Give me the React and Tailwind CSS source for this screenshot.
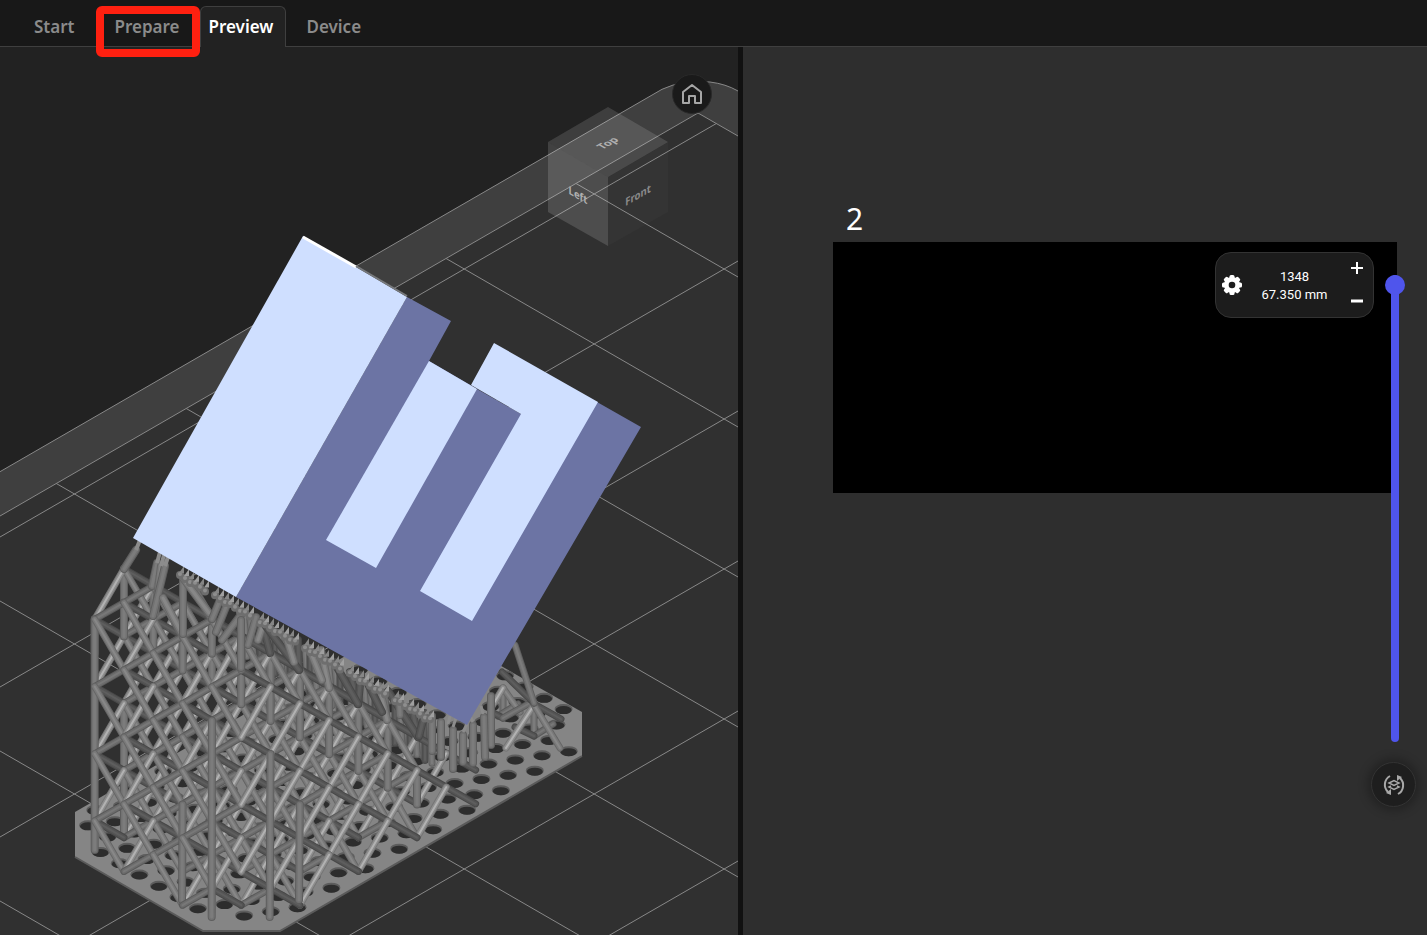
import { useMemo, useState } from "react";

const TABS = [
  { id: "start", label: "Start" },
  { id: "prepare", label: "Prepare", marked: true },
  { id: "preview", label: "Preview" },
  { id: "device", label: "Device" },
];

// [edge, body, highlight] for each strut direction
const TONES = {
  post: ["#5e5e5e", "#727272", "#7c7c7c"],
  down: ["#666666", "#7a7a7a", "#888888"],
  rise: ["#757575", "#8e8e8e", "#b2b2b2"],
  flat: ["#5a5a5a", "#6c6c6c", "#787878"],
  dark: ["#484848", "#545454", "#5e5e5e"],
};

const BASE = [
  [75, 812], [75, 857], [203, 931], [280, 931], [582, 756],
  [582, 712], [450, 637], [380, 636],
];

const node = (i, j, k) => [94.7 + 29.3 * (i + j), 854.5 + 16.9 * (i - j) - 33.6 * k];
const topLevel = (i, j) => (i === 0 && j === 0 ? 7 : 9 - j);

function buildLattice() {
  const out = [];
  const add = (a, b, tone, depth) => out.push({ a, b, tone, depth });

  for (let i = 0; i <= 5; i++) {
    for (let j = 0; j <= 8; j++) {
      const top = topLevel(i, j);
      const corner = i === 5 && j === 0;
      for (let k = corner ? 2 : 0; k <= top; k++) {
        if ((i + j + k) % 2 === 0) continue;
        const p = node(i, j, k);
        const d = i - j + k * 0.01;
        if (i < 5 && j < 7) {
          const lowOk = !(i === 4 && j === 0 && k < 3);
          if (k + 1 <= topLevel(i + 1, j) && lowOk) add(p, node(i + 1, j, k + 1), "flat", d + 0.4);
          if (k > 0 && lowOk) add(p, node(i + 1, j, k - 1), "down", d + 0.5);
        }
        // the inner cross frames stop short of the left wall
        if (i === 2 && j < 2) continue;
        if (k + 1 <= topLevel(i, j + 1)) add(p, node(i, j + 1, k + 1), "rise", d - 0.4);
        if (k > 0) add(p, node(i, j + 1, k - 1), "dark", d - 0.5);
        if (k >= top - 1 && j < 7) add(p, [p[0], p[1] + 34], "post", d - 0.8);
      }
    }
  }
  add(node(0, 0, 7), [94.7, 850], "post", 0.2);
  add(node(0, 1, 4), [124, 834], "post", -0.8);
  add(node(3, 0, 3), [182, 900], "post", 3.3);
  add(node(4, 0, 6), [211.7, 917], "post", 4.7);
  add(node(5, 1, 5), [269.7, 917], "post", 4.8);
  add(node(5, 2, 3), [299, 900], "post", 3.8);
  return out.sort((m, n) => m.depth - n.depth);
}

function insideBase(x, y) {
  return (
    x > 82 && x < 574 &&
    y < 849 + (x - 75) * 0.577 && y < 918 &&
    y < 924 - (x - 280) * 0.577 &&
    y > 820 - (x - 75) * 0.577 && y > 719 - (582 - x) * 0.577
  );
}

function buildHoles() {
  const out = [];
  for (let m = -22; m < 12; m++) {
    for (let n = -14; n < 16; n++) {
      const x = 454.7 + 26.7 * m + 19.5 * n;
      const y = 783 - 4.12 * m + 11.26 * n;
      if (insideBase(x, y)) out.push([x, y]);
    }
  }
  return out;
}

// Thick struts that fan out from the lattice to the underside of the part
const FANS = [
  [124, 569, 136, 550, "post"], [152, 586, 157, 563, "post"], [155, 614, 161, 566, "down"],
  [153, 616, 165, 566, "post"], [163, 598, 181, 632, "down"], [183, 634, 183, 580, "post"],
  [212, 619, 189, 580, "down"], [209, 613, 183, 578, "down"], [212, 619, 220, 600, "post"],
  [216, 632, 228, 602, "post"], [222, 640, 243, 612, "post"], [241, 668, 241, 620, "post"],
  [248, 645, 256, 617, "post"], [270, 653, 262, 622, "dark"], [258, 640, 264, 622, "down"],
  [299, 670, 298, 640, "dark"], [299, 670, 265, 625, "dark"], [294, 662, 286, 636, "down"],
  [329, 688, 321, 650, "down"], [322, 680, 309, 648, "down"], [358, 704, 350, 672, "dark"],
  [358, 704, 361, 675, "dark"], [358, 704, 334, 662, "dark"],
  [387, 720, 379, 686, "down"], [382, 712, 367, 682, "dark"], [418, 737, 411, 704, "dark"],
  [418, 737, 388, 691, "dark"], [419, 736, 425, 713, "dark"], [400, 715, 399, 698, "post"],
  [432, 751, 432, 716, "post"], [441, 757, 441, 722, "post"], [491, 745, 491, 696, "post"],
  [485, 757, 484, 717, "post"], [463, 762, 463, 735, "post"], [473, 763, 473, 725, "post"],
  [453, 769, 453, 730, "post"],
];

const SIDE = [
  [503, 688, 503, 716, "post"], [498, 716, 518, 704, "flat"], [503, 688, 520, 712, "down"],
  [503, 688, 491, 708, "rise"], [491, 712, 503, 718, "dark"], [503, 718, 530, 703, "flat"],
  [534, 704, 561, 719, "dark"], [534, 706, 534, 734, "post"], [534, 736, 553, 724, "flat"],
  [515, 727, 534, 736, "dark"], [534, 705, 506, 748, "rise"], [534, 705, 560, 748, "down"],
  [502, 672, 534, 703, "dark"], [515, 645, 534, 703, "post"],
];

const underside = (x) => 538 + (x - 133) * 0.577;

function Strut({ a, b, tone, width = 7 }) {
  const [edge, body, light] = TONES[tone];
  const pos = { x1: a[0], y1: a[1], x2: b[0], y2: b[1], strokeLinecap: "round" };
  return (
    <>
      <line {...pos} stroke={edge} strokeWidth={width} />
      <line {...pos} stroke={body} strokeWidth={width - 2} />
      <line {...pos} stroke={light} strokeWidth={width - 5} />
    </>
  );
}

function BuildPlate() {
  const rows = [-3, -2, -1, 0, 1, 2, 3, 4, 5, 6, 7, 8, 9];
  return (
    <>
      <path d="M0 471.7 L662 89.3 Q684 79 710 82 Q726 84 738 91 V935 H0 Z" fill="#3f3f3f" />
      <path d="M0 516 L698 113 L738 136 V935 H0 Z" fill="#303030" />
      <g stroke="#888888" fill="none">
        <path d="M0 471.7 L662 89.3 Q684 79 710 82 Q726 84 738 91" />
        <path d="M0 516 L698 113 L738 136" />
        <g clipPath="url(#plate)">
          {rows.map((r) => (
            <g key={r}>
              <path d={`M0 ${687 + 150 * (r - 1)} L738 ${261 + 150 * (r - 1)}`} />
              <path d={`M0 ${-149 + 150 * r} L738 ${277 + 150 * r}`} />
            </g>
          ))}
        </g>
      </g>
      <clipPath id="plate">
        <path d="M0 516 L698 113 L738 136 V935 H0 Z" />
      </clipPath>
    </>
  );
}

function Supports() {
  const lattice = useMemo(buildLattice, []);
  const holes = useMemo(buildHoles, []);
  const pins = Array.from({ length: 64 }, (_, n) => 150 + n * 5).filter((_, n) => n % 9 !== 3);

  return (
    <>
      <polygon points={BASE.join(" ")} fill="#858585" />
      <path d="M75 857 L203 931 H280 L582 756" fill="none" stroke="#5a5a5a" strokeWidth="2" />
      {holes.map(([x, y]) => (
        <g key={`${x}-${y}`}>
          <ellipse cx={x} cy={y} rx="9" ry="5" fill="#5d5d5d" />
          <ellipse cx={x} cy={y + 1} rx="8" ry="4" fill="#2d2d2d" />
        </g>
      ))}
      {SIDE.map(([x1, y1, x2, y2, tone], n) => (
        <Strut key={n} a={[x1, y1]} b={[x2, y2]} tone={tone} />
      ))}
      {pins.filter((x) => x > 235 && x < 432).map((x, n) => (
        <Strut
          key={x}
          a={[x, underside(x) + 14]}
          b={[x + (n % 3) * 2, underside(x) + 54]}
          tone={n % 3 ? "post" : "dark"}
        />
      ))}
      {lattice.map((s, n) => (
        <Strut key={n} {...s} width={s.tone === "post" ? 8 : 7} />
      ))}
      {FANS.map(([x1, y1, x2, y2, tone], n) => (
        <Strut key={n} a={[x1, y1]} b={[x2, y2]} tone={tone} width={8} />
      ))}
      <path d="M136 550 L140 540 M157 563 L160 552 M161 566 L164 555 M165 566 L168 557" stroke="#8c8c8c" strokeWidth="4" />
      {pins.filter((x) => x > 178 && x < 440).map((x, n) => (
        <g key={x}>
          <circle cx={x} cy={underside(x) + 10 + (n % 3)} r="4" fill="#6e6e6e" />
          <circle cx={x} cy={underside(x) + 9 + (n % 3)} r="2" fill="#8e8e8e" />
          <path
            d={`M${x - 1} ${underside(x) + 8} l5 -7 v7 Z`}
            fill={n % 2 ? "#a0a0a0" : "#868686"}
          />
        </g>
      ))}
      <path d="M453 727 L456 718 M448 724 L450 716 M463 732 L467 724 M473 722 L469 714 M483 714 L481 706" stroke="#8c8c8c" strokeWidth="3" />
    </>
  );
}

function Part() {
  return (
    <>
      <path
        d="M407 297 L451 321 L429 361 L477 389 L521 414 L597 402 L641 427 L467 725 L236 597 Z"
        fill="#6c74a4"
      />
      <g fill="#cfdfff">
        <path d="M303 236 L407 297 L236 597 L133 538 Z" />
        <path d="M429 361 L477 389 L376 568 L326 540 Z" />
        <path d="M494 343 L598 402 L472 621 L420 591 L521 414 L471 385 Z" />
      </g>
      <path d="M303 237 L356 267" stroke="#ffffff" strokeWidth="3" />
      <path d="M356 266 L407 296" stroke="#77797c" strokeWidth="2" />
    </>
  );
}

function ViewCube() {
  return (
    <g>
      <g fill="#ffffff">
        <path d="M608 107 L668 142 L608 177 L548 142 Z" fillOpacity="0.13" />
        <path d="M548 142 L608 177 V246 L548 212 Z" fillOpacity="0.14" />
        <path d="M608 177 L668 142 V212 L608 246 Z" fillOpacity="0.02" />
      </g>
      <g fontFamily="Noto Sans, sans-serif" fontWeight="700" fontSize="11" textAnchor="middle">
        <text transform="matrix(0.87 -0.5 0.87 0.5 611 145)" fill="#b0b0b0">Top</text>
        <text transform="matrix(0.87 0.5 0 1 578 199)" fill="#b0b0b0">Left</text>
        <text transform="matrix(0.87 -0.5 0 1 638 199)" fill="#8a8a8a">Front</text>
      </g>
    </g>
  );
}

function Scene() {
  return (
    <svg viewBox="0 47 738 888" className="block w-full" role="img" aria-label="Sliced part on the build plate">
      <BuildPlate />
      <Supports />
      <Part />
      <ViewCube />
    </svg>
  );
}

function Tabs({ active, onChange }) {
  return (
    <nav className="flex h-[47px] items-end border-b border-[#3f3f3f] bg-[#181818] pl-3.5 font-['Noto_Sans',sans-serif] text-[17px] font-semibold">
      {TABS.map((t) => (
        <button
          key={t.id}
          onClick={() => onChange(t.id)}
          className={`relative -mb-px h-[41px] ${
            t.id === active
              ? "rounded-t-md border border-b-0 border-[#3f3f3f] bg-[#222222] pr-3 pl-2 text-white"
              : "px-5 text-[#8b8b8b]"
          }`}
        >
          {t.label}
          {t.marked && (
            <span className="pointer-events-none absolute top-0 right-0 left-0.5 z-10 h-[51px] rounded-md border-8 border-[#ff2010]" />
          )}
        </button>
      ))}
    </nav>
  );
}

function GearIcon() {
  return (
    <svg width="20" height="20" viewBox="0 0 20 20">
      <g fill="#ffffff">
        <circle cx="10" cy="10" r="8" />
        {[0, 45, 90, 135].map((a) => (
          <rect key={a} x="7.5" y="0" width="5" height="20" rx="1.5" transform={`rotate(${a} 10 10)`} />
        ))}
      </g>
      <circle cx="10" cy="10" r="3.3" fill="#1c1c1c" />
    </svg>
  );
}

function LayerPanel({ layer, onStep }) {
  return (
    <div className="absolute top-2.5 right-[23px] flex h-[66px] w-[159px] items-center rounded-2xl border border-[#333333] bg-[#1c1c1c] pl-1.5 text-white">
      <button aria-label="Layer settings">
        <GearIcon />
      </button>
      <div className="flex-1 pt-px pl-1.5 text-center font-['Roboto',sans-serif] text-[13px] leading-[18px]">
        <p>{layer}</p>
        <p>{(layer * 0.05 - 0.05).toFixed(3)} mm</p>
      </div>
      <div className="flex h-full w-8 flex-col items-center justify-between py-2">
        <button aria-label="Layer up" onClick={() => onStep(1)}>
          <svg width="14" height="14" viewBox="0 0 14 14" stroke="#ffffff" strokeWidth="2">
            <path d="M1 7 H13 M7 1 V13" />
          </svg>
        </button>
        <button aria-label="Layer down" onClick={() => onStep(-1)}>
          <svg width="14" height="14" viewBox="0 0 14 14" stroke="#ffffff" strokeWidth="3">
            <path d="M1 6 H13" />
          </svg>
        </button>
      </div>
    </div>
  );
}

export default function App() {
  const [tab, setTab] = useState("preview");
  const [layer, setLayer] = useState(1348);

  return (
    <div className="flex min-h-screen flex-col overflow-hidden bg-[#222222]">
      <Tabs active={tab} onChange={setTab} />

      <main className="grid flex-1 grid-cols-[738fr_5px_684fr]">
        <section className="relative">
          <Scene />
          <button
            aria-label="Reset view"
            className="absolute top-[27px] right-[26px] flex size-10 items-center justify-center rounded-full border border-[#292929] bg-[#1a1a1a]"
          >
            <svg width="22" height="22" viewBox="0 0 22 22" fill="none" stroke="#a6a6a6" strokeWidth="2" strokeLinejoin="round">
              <path d="M11 2 L20 9 V20 H14 V13 H8 V20 H2 V9 Z" />
            </svg>
          </button>
        </section>

        <div className="bg-[#111111]" />

        {/* Layer image */}
        <section className="relative bg-[#2e2e2e] pt-[152px] pr-[30px] pl-[90px]">
          <p className="h-[43px] pl-[13px] font-['Noto_Sans',sans-serif] text-[30px] leading-[40px] text-white">2</p>
          <div className="relative h-[251px] bg-black">
            <LayerPanel layer={layer} onStep={(n) => setLayer((v) => Math.min(1348, Math.max(1, v + n)))} />
          </div>

          <input
            type="range"
            aria-label="Layer"
            min="1"
            max="1348"
            value={layer}
            onChange={(e) => setLayer(Number(e.target.value))}
            className="absolute top-[228px] right-[22px] h-[467px] w-5 appearance-none bg-transparent [direction:rtl] [writing-mode:vertical-lr] [&::-webkit-slider-runnable-track]:w-2 [&::-webkit-slider-runnable-track]:rounded-full [&::-webkit-slider-runnable-track]:bg-[#4f55ec] [&::-webkit-slider-thumb]:-ml-1.5 [&::-webkit-slider-thumb]:size-5 [&::-webkit-slider-thumb]:appearance-none [&::-webkit-slider-thumb]:rounded-full [&::-webkit-slider-thumb]:bg-[#4f55ec]"
          />

          <button
            aria-label="Slice again"
            className="absolute top-[715px] right-[11px] flex size-[45px] items-center justify-center rounded-full border border-[#333333] bg-[#1e1e1e] shadow-[0_0_10px_4px_rgba(0,0,0,0.25)]"
          >
            <svg width="22" height="22" viewBox="0 0 22 22" fill="none" stroke="#a8a8a8" strokeWidth="2">
              <path d="M7 2 A10 10 0 0 0 5 18" />
              <path d="M15 20 A10 10 0 0 0 17 4" />
              <path d="M8 15 V21 L3 19 Z M14 7 V1 L19 3 Z" fill="#a8a8a8" stroke="none" />
              <path d="M6 9 L11 6.5 L16 9 L11 11.5 Z" strokeWidth="1.5" />
              <path d="M8 12 L6 13 L11 15.500 L16 13 L14 12" strokeWidth="1.5" />
            </svg>
          </button>
        </section>
      </main>
    </div>
  );
}
